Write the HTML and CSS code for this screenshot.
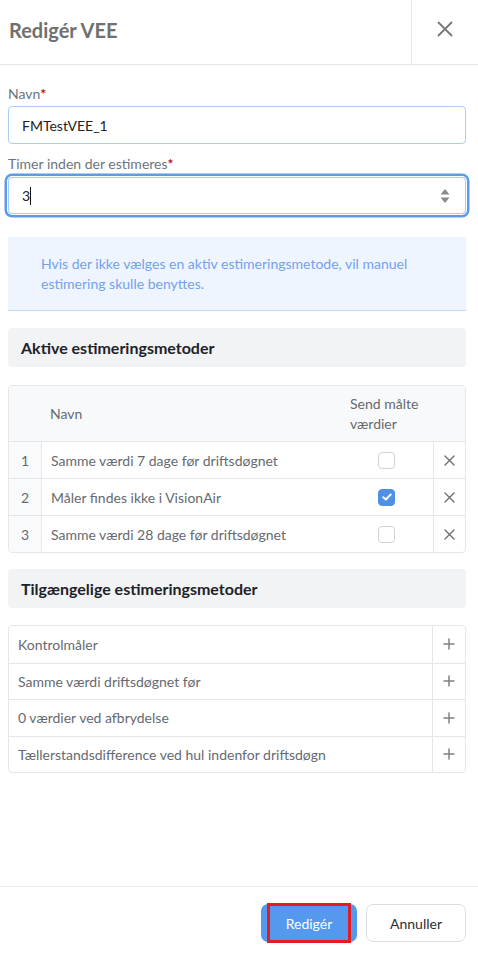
FILE: index.html
```html
<!DOCTYPE html>
<html lang="da">
<head>
<meta charset="utf-8">
<title>Redigér VEE</title>
<link rel="stylesheet" href="styles.css">
</head>
<body>
<div class="panel">
  <header class="header">
    <h1 class="title">Redigér VEE</h1>
    <button class="close" aria-label="Luk">
      <svg width="16" height="16" viewBox="0 0 16 16"><path d="M1.5 1.5L14.5 14.5M14.5 1.5L1.5 14.5" stroke="#777" stroke-width="1.8" stroke-linecap="round"/></svg>
    </button>
  </header>

  <main class="content">
    <div class="field">
      <label class="label">Navn<span class="req">*</span></label>
      <div class="input">FMTestVEE_1</div>
    </div>
    <div class="field">
      <label class="label">Timer inden der estimeres<span class="req">*</span></label>
      <div class="input focused"><span class="value">3</span><span class="caret"></span>
        <svg class="spin" width="10" height="16" viewBox="0 0 10 16"><path d="M5 1L9.5 6.5H0.5Z" fill="#8a8a8a"/><path d="M5 15L9.5 9.5H0.5Z" fill="#8a8a8a"/></svg>
      </div>
    </div>

    <div class="info">Hvis der ikke vælges en aktiv estimeringsmetode, vil manuel estimering skulle benyttes.</div>

    <h2 class="section">Aktive estimeringsmetoder</h2>

    <div class="grid">
      <div class="row head">
        <div class="c num"></div>
        <div class="c name">Navn</div>
        <div class="c chk htext">Send målte værdier</div>
        <div class="c act"></div>
      </div>
      <div class="row">
        <div class="c num">1</div>
        <div class="c name">Samme værdi 7 dage før driftsdøgnet</div>
        <div class="c chk center"><span class="box"></span></div>
        <div class="c act center"><svg width="11" height="11" viewBox="0 0 11 11"><path d="M1 1L10 10M10 1L1 10" stroke="#6f6f6f" stroke-width="1.4" stroke-linecap="round"/></svg></div>
      </div>
      <div class="row">
        <div class="c num">2</div>
        <div class="c name">Måler findes ikke i VisionAir</div>
        <div class="c chk center"><span class="box on"><svg width="10" height="8" viewBox="0 0 10 8"><path d="M1.3 4.2L3.8 6.5L8.7 1.5" fill="none" stroke="#fff" stroke-width="1.9" stroke-linecap="round" stroke-linejoin="round"/></svg></span></div>
        <div class="c act center"><svg width="11" height="11" viewBox="0 0 11 11"><path d="M1 1L10 10M10 1L1 10" stroke="#6f6f6f" stroke-width="1.4" stroke-linecap="round"/></svg></div>
      </div>
      <div class="row">
        <div class="c num">3</div>
        <div class="c name">Samme værdi 28 dage før driftsdøgnet</div>
        <div class="c chk center"><span class="box"></span></div>
        <div class="c act center"><svg width="11" height="11" viewBox="0 0 11 11"><path d="M1 1L10 10M10 1L1 10" stroke="#6f6f6f" stroke-width="1.4" stroke-linecap="round"/></svg></div>
      </div>
    </div>

    <h2 class="section second">Tilgængelige estimeringsmetoder</h2>

    <div class="list">
      <div class="item"><div class="iname">Kontrolmåler</div><div class="add"><svg width="12" height="12" viewBox="0 0 12 12"><path d="M6 0.5V11.5M0.5 6H11.5" stroke="#808080" stroke-width="1.5"/></svg></div></div>
      <div class="item"><div class="iname">Samme værdi driftsdøgnet før</div><div class="add"><svg width="12" height="12" viewBox="0 0 12 12"><path d="M6 0.5V11.5M0.5 6H11.5" stroke="#808080" stroke-width="1.5"/></svg></div></div>
      <div class="item"><div class="iname">0 værdier ved afbrydelse</div><div class="add"><svg width="12" height="12" viewBox="0 0 12 12"><path d="M6 0.5V11.5M0.5 6H11.5" stroke="#808080" stroke-width="1.5"/></svg></div></div>
      <div class="item"><div class="iname">Tællerstandsdifference ved hul indenfor driftsdøgn</div><div class="add"><svg width="12" height="12" viewBox="0 0 12 12"><path d="M6 0.5V11.5M0.5 6H11.5" stroke="#808080" stroke-width="1.5"/></svg></div></div>
    </div>
  </main>

  <footer class="footer">
    <button class="btn primary">Redigér<span class="highlight"></span></button>
    <button class="btn secondary">Annuller</button>
  </footer>
</div>
</body>
</html>
```

FILE: styles.css
```css
* { box-sizing: border-box; }
html, body { margin: 0; padding: 0; height: 100%; }
body {
  font-family: Lato, "Open Sans", "Liberation Sans", sans-serif;
  font-size: 14px;
  color: #333;
  background: #fff;
}
.panel {
  display: flex;
  flex-direction: column;
  min-height: 956px;
}
.header {
  display: flex;
  height: 65px;
  border-bottom: 1px solid #e6e6e6;
}
.title {
  flex: 1;
  margin: 0;
  padding-left: 9px;
  font-size: 20px;
  font-weight: 700;
  color: #707070;
  line-height: 60px;
}
.close {
  width: 67px;
  border: 0;
  border-left: 1px solid #e6e6e6;
  background: transparent;
  display: flex;
  align-items: center;
  justify-content: center;
  padding: 0 0 6px 0;
}
.content {
  flex: 1;
  padding: 19px 12px 0 8px;
}
.field { display: flex; flex-direction: column; }
.field + .field { margin-top: 10px; }
.label {
  font-size: 14px;
  line-height: 20px;
  color: #6c757d;
  margin-bottom: 2px;
}
.req { color: #b0182a; font-weight: 700; }
.input {
  height: 38px;
  border: 1px solid #a9cdf7;
  border-radius: 4px;
  padding: 0 13px;
  display: flex;
  align-items: center;
  font-size: 14px;
  color: #222;
}
.input.focused {
  height: 37px;
  margin-top: 1px;
  box-shadow: 0 0 0 1px #fff, 0 0 0 3.5px #5b9bea;
}
.caret {
  display: inline-block;
  width: 1px;
  height: 18px;
  background: #111;
  margin-left: 0;
}
.spin { margin-left: auto; margin-right: 2px; }
.info {
  margin-top: 23px;
  background: #eef5ff;
  border-bottom: 1px solid #c4dcf8;
  padding: 17px 30px 16px 33px;
  color: #74a1f0;
  font-size: 14px;
  line-height: 20px;
}
.section {
  margin: 17px 0 0 0;
  height: 39px;
  background: #f2f3f5;
  border-radius: 4px;
  padding: 0 13px;
  font-size: 16px;
  font-weight: 700;
  color: #1e2228;
  line-height: 40px;
}
.grid {
  margin-top: 18px;
  border: 1px solid #e4e6ea;
  border-radius: 4px;
  overflow: hidden;
}
.row {
  display: grid;
  grid-template-columns: 32px 1fr 93px 32px;
  height: 37px;
  border-top: 1px solid #e4e6ea;
  color: #666a70;
}
.row.head {
  height: 55px;
  border-top: 0;
  background: #f8f9fb;
}
.c {
  display: flex;
  align-items: center;
}
.row:not(.head) .c + .c { border-left: 1px solid #e4e6ea; }
.row:not(.head) .c.chk { border-left: 0; }
.num {
  justify-content: center;
  background: #f9fafb;
}
.row.head .num { background: transparent; }
.name { padding-left: 9px; }
.htext { padding-left: 10px; line-height: 20px; padding-right: 14px; }
.center { justify-content: center; }
.box {
  width: 17px;
  height: 17px;
  border: 1px solid #cfd3d8;
  border-radius: 4px;
  background: #fff;
  display: flex;
  align-items: center;
  justify-content: center;
}
.box.on { background: #4f8fe6; border-color: #4f8fe6; }
.section.second { margin-top: 16px; }
.list {
  margin-top: 17px;
  border: 1px solid #e4e6ea;
  border-radius: 4px;
  overflow: hidden;
}
.item {
  display: flex;
  height: 36.5px;
  color: #666a70;
}
.item + .item { border-top: 1px solid #e4e6ea; }
.iname {
  flex: 1;
  display: flex;
  align-items: center;
  padding-left: 9px;
}
.add {
  width: 33px;
  border-left: 1px solid #e4e6ea;
  display: flex;
  align-items: center;
  justify-content: center;
}
.footer {
  height: 70px;
  border-top: 1px solid #eeeeee;
  display: flex;
  justify-content: flex-end;
  align-items: flex-start;
  gap: 9px;
  padding: 17px 12px 0 0;
}
.btn {
  height: 38px;
  border-radius: 7px;
  font-family: inherit;
  font-size: 14px;
  position: relative;
}
.primary {
  width: 96px;
  background: #5599ee;
  border: 0;
  color: #fff;
}
.secondary {
  width: 100px;
  background: #fff;
  border: 1px solid #dcdfe3;
  color: #2b2f33;
}
.highlight {
  position: absolute;
  left: 6px;
  right: 6px;
  top: -1px;
  bottom: -1px;
  border: 3px solid #e31b23;
}
```
